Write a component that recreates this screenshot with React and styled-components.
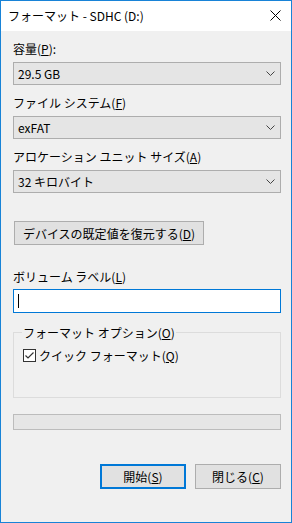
import React from "react";
import styled, { createGlobalStyle } from "styled-components";

const GlobalStyle = createGlobalStyle`
  html, body {
    margin: 0;
    padding: 0;
    background: #ffffff;
  }
  * {
    box-sizing: border-box;
  }
`;

const Chevron = () => (
  <svg width="9" height="6" viewBox="0 0 9 6">
    <polyline points="0.5,0.5 4.5,4.5 8.5,0.5" fill="none" stroke="#444" strokeWidth="1" />
  </svg>
);

const CloseIcon = () => (
  <svg width="11" height="11" viewBox="0 0 11 11">
    <path d="M0.5 0.5 L10.5 10.5 M10.5 0.5 L0.5 10.5" stroke="#000" strokeWidth="1" />
  </svg>
);

const CheckIcon = () => (
  <svg width="13" height="13" viewBox="0 0 13 13">
    <rect x="0.5" y="0.5" width="12" height="12" fill="#fff" stroke="#333" />
    <polyline points="2.5,6.5 5,9 10.5,3.5" fill="none" stroke="#333" strokeWidth="1.2" />
  </svg>
);

export default function App() {
  return (
    <>
      <GlobalStyle />
      <Window>
        <TitleBar>
          <Title>フォーマット - SDHC (D:)</Title>
          <CloseButton>
            <CloseIcon />
          </CloseButton>
        </TitleBar>
        <Body>
          <Label>
            容量(<u>P</u>):
          </Label>
          <Combo>
            <span>29.5 GB</span>
            <Chevron />
          </Combo>

          <Label>
            ファイル システム(<u>F</u>)
          </Label>
          <Combo>
            <span>exFAT</span>
            <Chevron />
          </Combo>

          <Label>
            アロケーション ユニット サイズ(<u>A</u>)
          </Label>
          <Combo>
            <span>32 キロバイト</span>
            <Chevron />
          </Combo>

          <RestoreButton>
            デバイスの既定値を復元する(<u>D</u>)
          </RestoreButton>

          <Label $gap={5}>
            ボリューム ラベル(<u>L</u>)
          </Label>
          <TextInput>
            <Caret />
          </TextInput>

          <Group>
            <Legend>
              フォーマット オプション(<u>O</u>)
            </Legend>
            <CheckRow>
              <CheckIcon />
              <span>
                クイック フォーマット(<u>Q</u>)
              </span>
            </CheckRow>
          </Group>

          <Progress />

          <Actions>
            <DialogButton $primary>
              開始(<u>S</u>)
            </DialogButton>
            <DialogButton>
              閉じる(<u>C</u>)
            </DialogButton>
          </Actions>
        </Body>
      </Window>
    </>
  );
}

const Window = styled.div`
  width: 292px;
  height: 523px;
  border: 1px solid #1883d7;
  display: flex;
  flex-direction: column;
  font-family: "Noto Sans CJK JP", "Noto Sans", sans-serif;
  font-size: 12px;
  color: #000;

  u {
    text-decoration: underline;
    text-underline-offset: 1px;
  }
`;

const TitleBar = styled.div`
  height: 30px;
  flex-shrink: 0;
  background: #fff;
  display: flex;
  align-items: center;
  justify-content: space-between;
  padding: 0 10px 0 7px;
`;

const Title = styled.div`
  font-size: 12px;
  line-height: 15px;
  margin-top: -1px;
`;

const CloseButton = styled.div`
  display: flex;
  align-items: center;
  margin-top: -2px;
`;

const Body = styled.div`
  flex: 1;
  background: #f0f0f0;
  padding: 10px 10px 0 12px;
  display: flex;
  flex-direction: column;
`;

const Label = styled.div`
  line-height: 15px;
  height: 15px;
  margin-bottom: ${(p) => p.$gap || 6}px;
`;

const Combo = styled.div`
  height: 23px;
  border: 1px solid #adadad;
  background: #e5e5e5;
  display: flex;
  align-items: center;
  justify-content: space-between;
  padding: 0 5px 0 4px;
  margin-bottom: 10px;
  line-height: 15px;
`;

const RestoreButton = styled.div`
  width: 190px;
  height: 24px;
  margin: 18px 0 24px 1px;
  border: 1px solid #adadad;
  background: #e1e1e1;
  display: flex;
  align-items: center;
  justify-content: center;
  line-height: 15px;
`;

const TextInput = styled.div`
  height: 24px;
  border: 1px solid #0078d7;
  background: #fff;
  display: flex;
  align-items: center;
  padding-left: 4px;
`;

const Caret = styled.div`
  width: 1px;
  height: 14px;
  background: #000;
`;

const Group = styled.fieldset`
  margin: 12px 0 0 0;
  padding: 0 9px 34px 9px;
  border: 1px solid #dcdcdc;
  min-width: 0;
`;

const Legend = styled.legend`
  padding: 0 1px;
  margin-left: -1px;
  line-height: 15px;
`;

const CheckRow = styled.div`
  display: flex;
  align-items: center;
  gap: 3px;
  margin-top: 8px;
  line-height: 15px;
`;

const Progress = styled.div`
  height: 16px;
  margin-top: 16px;
  border: 1px solid #bcbcbc;
  background: #e6e6e6;
`;

const Actions = styled.div`
  display: flex;
  justify-content: flex-end;
  gap: 9px;
  margin-top: 34px;
`;

const DialogButton = styled.div`
  width: 86px;
  height: 25px;
  border: ${(p) => (p.$primary ? "2px solid #0078d7" : "1px solid #adadad")};
  background: #e1e1e1;
  display: flex;
  align-items: center;
  justify-content: center;
  line-height: 15px;
`;
